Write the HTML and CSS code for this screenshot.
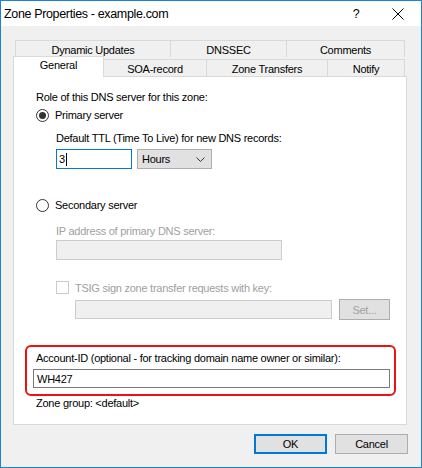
FILE: index.html
```html
<!DOCTYPE html>
<html>
<head>
<meta charset="utf-8">
<link rel="stylesheet" href="styles.css">
</head>
<body>
<div class="window">
  <div class="titlebar">
    <span class="title">Zone Properties - example.com</span>
    <span class="help">?</span>
    <span class="close"><svg width="12" height="12" viewBox="0 0 12 12"><path d="M0.5 0.5L11.5 11.5M11.5 0.5L0.5 11.5" stroke="#000" stroke-width="1"/></svg></span>
  </div>
  <div class="body">
    <div class="tabs-back">
      <div class="tab t-dyn">Dynamic Updates</div>
      <div class="tab t-dns">DNSSEC</div>
      <div class="tab t-com">Comments</div>
    </div>
    <div class="tabs-front">
      <div class="tab active t-gen">General</div>
      <div class="tab t-soa">SOA-record</div>
      <div class="tab t-zt">Zone Transfers</div>
      <div class="tab t-not">Notify</div>
    </div>
    <div class="panel">
      <div class="label role">Role of this DNS server for this zone:</div>
      <div class="radio-row primary">
        <span class="radio checked"><span class="dot"></span></span>
        <span class="radio-label">Primary server</span>
      </div>
      <div class="label indent ttl-label">Default TTL (Time To Live) for new DNS records:</div>
      <div class="ttl-row">
        <div class="textbox focused">3<span class="caret"></span></div>
        <div class="select">
          <span>Hours</span>
          <svg width="9" height="5" viewBox="0 0 9 5"><path d="M0.5 0.5L4.5 4.5L8.5 0.5" fill="none" stroke="#333" stroke-width="1"/></svg>
        </div>
      </div>
      <div class="radio-row secondary">
        <span class="radio"></span>
        <span class="radio-label">Secondary server</span>
      </div>
      <div class="label indent disabled ip-label">IP address of primary DNS server:</div>
      <div class="textbox disabled-box ip-box"></div>
      <div class="check-row">
        <span class="checkbox"></span>
        <span class="disabled">TSIG sign zone transfer requests with key:</span>
      </div>
      <div class="key-row">
        <div class="textbox disabled-box key-box"></div>
        <div class="btn set-btn">Set...</div>
      </div>
      <div class="account">
        <div class="label account-label">Account-ID (optional - for tracking domain name owner or similar):</div>
        <div class="textbox account-box">WH427</div>
      </div>
      <div class="label zone-group">Zone group: &lt;default&gt;</div>
    </div>
    <div class="buttons">
      <div class="btn ok">OK</div>
      <div class="btn">Cancel</div>
    </div>
  </div>
</div>
</body>
</html>
```
FILE: styles.css
```css
* { box-sizing: border-box; }
html, body { margin: 0; padding: 0; }
body {
  font-family: "Liberation Sans", Arial, sans-serif;
  font-size: 11px;
  letter-spacing: -0.25px;
  color: #000;
  background: #fff;
}
.window {
  width: 422px;
  height: 468px;
  border: 1px solid #1883d7;
  background: #f0f0f0;
  display: flex;
  flex-direction: column;
}
.titlebar {
  height: 25px;
  background: #fff;
  display: flex;
  align-items: center;
}
.title {
  padding-left: 3px;
  font-size: 12.5px;
  letter-spacing: -0.35px;
  flex: 1;
}
.help {
  width: 20px;
  text-align: center;
  font-size: 12.5px;
  margin-right: 9px;
}
.close {
  width: 46px;
  display: flex;
  justify-content: center;
  align-items: center;
}
.body {
  flex: 1;
  display: flex;
  flex-direction: column;
}
.tabs-back {
  display: flex;
  margin: 14px 0 0 14px;
  height: 17px;
}
.tab {
  border: 1px solid #d9d9d9;
  border-bottom: none;
  background: #f0f0f0;
  display: flex;
  justify-content: center;
  align-items: center;
  height: 100%;
}
.tabs-back .tab { padding-top: 2px; }
.t-dyn { width: 156px; }
.t-dns { width: 117px; margin-left: -1px; }
.t-com { width: 119px; margin-left: -1px; }
.tabs-front {
  display: flex;
  align-items: flex-end;
  height: 20px;
  margin-left: 12px;
}
.tabs-front .tab {
  height: 17px;
  margin-bottom: 1px;
  padding-top: 1px;
}
.tabs-front .tab.active {
  height: 21px;
  margin-bottom: 0;
  background: #fff;
  position: relative;
  z-index: 2;
  align-items: flex-start;
  padding-top: 2px;
}
.t-gen { width: 91px; }
.t-soa { width: 104px; margin-left: -1px; }
.t-zt { width: 122px; margin-left: -1px; }
.t-not { width: 78px; margin-left: -1px; }
.panel {
  margin: -1px 0 0 12px;
  width: 394px;
  height: 349px;
  border: 1px solid #d9d9d9;
  background: #fff;
  padding-left: 22px;
  display: flex;
  flex-direction: column;
  align-items: flex-start;
}
.label { line-height: 15px; height: 15px; white-space: nowrap; }
.indent { margin-left: 20px; }
.disabled { color: #a0a0a0; }
.role { margin-top: 13px; }
.radio-row {
  display: flex;
  align-items: center;
  height: 14px;
}
.primary { margin-top: 3px; }
.secondary { margin-top: 29px; }
.radio {
  width: 13px;
  height: 13px;
  border: 1px solid #333;
  border-radius: 50%;
  display: flex;
  align-items: center;
  justify-content: center;
  background: #fff;
}
.dot {
  width: 7px;
  height: 7px;
  border-radius: 50%;
  background: #333;
}
.radio-label { margin-left: 6px; }
.ttl-label { margin-top: 9px; }
.ttl-row {
  margin: 3px 0 0 20px;
  display: flex;
  height: 20px;
}
.textbox {
  height: 20px;
  border: 1px solid #7a7a7a;
  background: #fff;
  display: flex;
  align-items: center;
  padding-left: 2px;
}
.textbox.focused {
  width: 76px;
  border-color: #0078d7;
}
.caret {
  width: 1px;
  height: 13px;
  background: #000;
  margin-left: 1px;
}
.select {
  margin-left: 5px;
  width: 75px;
  height: 20px;
  border: 1px solid #adadad;
  background: #e1e1e1;
  display: flex;
  align-items: center;
  justify-content: space-between;
  padding: 0 6px 0 4px;
}
.ip-label { margin-top: 12px; }
.disabled-box {
  border-color: #cccccc;
  background: #f0f0f0;
}
.ip-box {
  margin: 1px 0 0 20px;
  width: 226px;
}
.check-row {
  margin: 21px 0 0 20px;
  display: flex;
  align-items: center;
  height: 13px;
}
.checkbox {
  width: 13px;
  height: 13px;
  border: 1px solid #cccccc;
  background: #fff;
  margin-right: 6px;
}
.key-row {
  margin: 5px 0 0 39px;
  display: flex;
  align-items: center;
  height: 21px;
}
.key-box {
  width: 257px;
  height: 19px;
}
.btn {
  border: 1px solid #adadad;
  background: #e1e1e1;
  display: flex;
  align-items: center;
  justify-content: center;
  width: 73px;
  height: 20px;
}
.set-btn {
  margin-left: 7px;
  width: 51px;
  height: 21px;
  color: #a0a0a0;
}
.account {
  margin: 25px 0 0 -11px;
  width: 371px;
  height: 51px;
  border: 2px solid #ee1111;
  border-radius: 6px;
  display: flex;
  flex-direction: column;
  padding: 4px 0 0 0;
}
.account-label { margin-left: 9px; }
.account-box {
  margin: 3px 0 0 6px;
  width: 357px;
  height: 19px;
  padding-left: 3px;
}
.zone-group { margin-top: 0; }
.buttons {
  margin-top: 9px;
  display: flex;
  justify-content: flex-end;
  gap: 8px;
  padding-right: 13px;
}
.btn.ok {
  border: 2px solid #0078d7;
}
```
